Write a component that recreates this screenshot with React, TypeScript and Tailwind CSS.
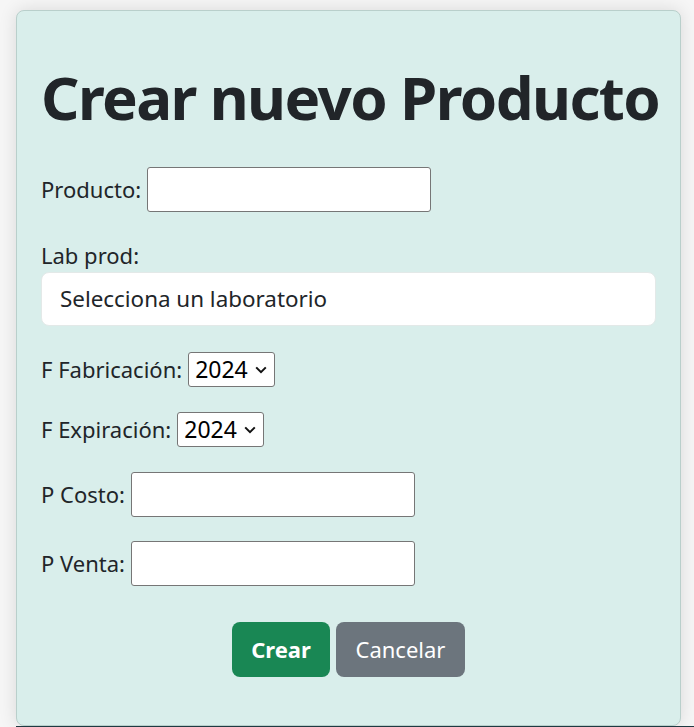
import React from "react";

const font = { fontFamily: '"Noto Sans", "Open Sans", sans-serif' };

function YearSelect() {
  return (
    <div className="relative w-[87px]">
      <select
        defaultValue="2024"
        className="h-[35px] w-full appearance-none rounded-[3px] border border-[#767676] bg-white pl-[6px] text-[23px] leading-none text-black outline-none"
      >
        <option>2024</option>
        <option>2025</option>
        <option>2026</option>
      </select>
      <svg
        className="pointer-events-none absolute right-[8px] top-[14px]"
        width="12"
        height="8"
        viewBox="0 0 12 8"
        fill="none"
      >
        <path d="M1.2 1.4L6 6.2l4.8-4.8" stroke="#111" strokeWidth="2" />
      </svg>
    </div>
  );
}

export default function App() {
  return (
    <div className="min-h-[727px] bg-[#f6f6f6] pl-4 pt-[10px]" style={font}>
      <div className="flex h-[716px] w-[665px] flex-col rounded-[8px] border border-[#b9cfcb] bg-[#d9eeeb] px-6 text-[#212529] shadow-[0_0_18px_rgba(0,0,0,0.12)]">
        <h1 className="mt-[50px] whitespace-nowrap text-[60px] font-bold leading-[72px] tracking-[-1.6px]">
          Crear nuevo Producto
        </h1>

        <div className="mt-[34px] flex items-center gap-[6px] text-[22px]">
          <label>Producto:</label>
          <input className="h-[45px] w-[284px] rounded-[3px] border border-[#767676] bg-white outline-none" />
        </div>

        <div className="mt-[29px] text-[22px] leading-[28px]">
          <label>Lab prod:</label>
        </div>
        <div className="mt-[3px] flex h-[54px] w-[615px] shrink-0 items-center rounded-[8px] border border-[#e3e9e8] bg-white pl-[18px] text-[22.4px]">
          Selecciona un laboratorio
        </div>

        <div className="mt-[26px] flex items-center gap-[6px] text-[22px]">
          <label>F Fabricación:</label>
          <YearSelect />
        </div>

        <div className="mt-[25px] flex items-center gap-[6px] text-[22px]">
          <label>F Expiración:</label>
          <YearSelect />
        </div>

        <div className="mt-[25px] flex items-center gap-[6px] text-[22px]">
          <label>P Costo:</label>
          <input className="h-[45px] w-[284px] rounded-[3px] border border-[#767676] bg-white outline-none" />
        </div>

        <div className="mt-[24px] flex items-center gap-[6px] text-[22px]">
          <label>P Venta:</label>
          <input className="h-[45px] w-[284px] rounded-[3px] border border-[#767676] bg-white outline-none" />
        </div>

        <div className="mt-[36px] flex justify-center gap-[6px] text-[22px]">
          <button className="h-[55px] w-[98px] rounded-[8px] bg-[#198754] font-bold text-white">
            Crear
          </button>
          <button className="h-[55px] w-[129px] rounded-[8px] bg-[#6c757d] text-white">
            Cancelar
          </button>
        </div>
      </div>
      <div className="h-px w-full bg-[#1f3a42]" />
    </div>
  );
}
